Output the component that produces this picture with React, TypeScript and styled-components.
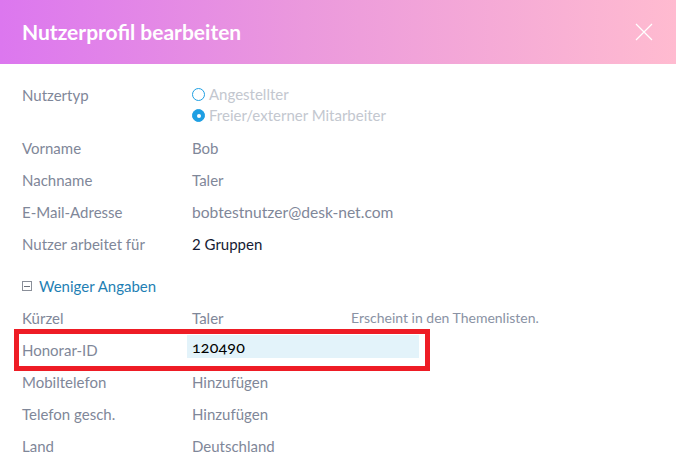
import React from "react";
import styled, { createGlobalStyle } from "styled-components";

/* Global reset and page font */
const GlobalStyle = createGlobalStyle`
    html, body {
        margin: 0;
        padding: 0;
        background: #ffffff;
    }
    body {
        font-family: "Lato", "Open Sans", sans-serif;
        font-size: 15px;
        color: #7f8799;
    }
    * { box-sizing: border-box; }
`;

const Dialog = styled.div`
    width: 676px;
    height: 461px;
    overflow: hidden;
    background: #ffffff;
`;

const Header = styled.header`
    height: 64px;
    display: flex;
    align-items: center;
    justify-content: space-between;
    padding: 0 22px;
    background: linear-gradient(90deg, #dc77ef 0%, #eb99dd 45%, #ffbbd0 100%);
`;

const Title = styled.h2`
    margin: 0;
    padding-bottom: 2px;
    font-size: 21px;
    font-weight: 700;
    color: #ffffff;
`;

const CloseButton = styled.button`
    width: 18px;
    height: 18px;
    padding: 0;
    margin-right: 1px;
    border: none;
    background: transparent;
    cursor: pointer;
    display: flex;
`;

const Body = styled.div`
    padding: 20px 22px 0;
`;

const Row = styled.div<{ $highlight?: boolean }>`
    display: grid;
    grid-template-columns: 170px 1fr;
    align-items: start;
    line-height: 32px;
    ${({ $highlight }) =>
        $highlight &&
        `
        margin-left: -3px;
        padding-left: 3px;
        width: 406px;
        outline: 5px solid #ee1c25;
    `}
`;

const TypeRow = styled(Row)`
    line-height: 21px;
    padding-bottom: 6px;
`;

const Label = styled.div`
    color: #7f8799;
`;

const TypeLabel = styled(Label)`
    padding-top: 1px;
`;

const Value = styled.div<{ $dark?: boolean }>`
    color: ${({ $dark }) => ($dark ? "#151a33" : "#7f8799")};
    display: flex;
    align-items: center;
    white-space: nowrap;
`;

const WideValue = styled(Value)`
    font-size: 15.6px;
`;

const ValueWithHint = styled.div`
    display: grid;
    grid-template-columns: 159px 1fr;
    align-items: center;
    color: #7f8799;
    white-space: nowrap;
`;

const Hint = styled.span`
    font-size: 14px;
    color: #8a92a4;
`;

const RadioGroup = styled.div`
    display: flex;
    flex-direction: column;
`;

const RadioOption = styled.label`
    display: flex;
    align-items: center;
    gap: 4px;
    color: #c3c7cf;
`;

const RadioDot = styled.span<{ $checked?: boolean }>`
    width: 13px;
    height: 13px;
    border-radius: 50%;
    border: 1.5px solid #1e9fe3;
    background: ${({ $checked }) => ($checked ? "#1e9fe3" : "#ffffff")};
    display: flex;
    align-items: center;
    justify-content: center;

    &::after {
        content: "";
        width: 4px;
        height: 4px;
        border-radius: 50%;
        background: #ffffff;
        display: ${({ $checked }) => ($checked ? "block" : "none")};
    }
`;

const ToggleRow = styled.div`
    margin-top: 10px;
    display: flex;
    align-items: center;
    gap: 7px;
    line-height: 32px;
    color: #1f7fb4;
`;

const ToggleBox = styled.span`
    width: 10px;
    height: 10px;
    border: 1px solid #8a8f99;
    display: flex;
    align-items: center;
    justify-content: center;

    &::after {
        content: "";
        width: 6px;
        height: 1px;
        background: #6d727c;
    }
`;

const FeeInput = styled.div`
    margin-left: -5px;
    margin-top: 1px;
    width: 232px;
    height: 23px;
    padding-left: 5px;
    display: flex;
    align-items: center;
    background: #e3f3fa;
    font-family: "Lato", sans-serif;
    font-variant-numeric: oldstyle-nums;
    font-size: 16px;
    font-weight: 400;
    letter-spacing: 0.2px;
    color: #000000;
`;

const fields = [
    { label: "Vorname", value: "Bob" },
    { label: "Nachname", value: "Taler" },
];

export default function App() {
    return (
        <Dialog>
            <GlobalStyle />
            <Header>
                <Title>Nutzerprofil bearbeiten</Title>
                <CloseButton aria-label="Schließen">
                    <svg width="18" height="18" viewBox="0 0 18 18">
                        <path d="M1 1 L17 17 M17 1 L1 17" stroke="#ffffff" strokeWidth="1.2" />
                    </svg>
                </CloseButton>
            </Header>

            <Body>
                <TypeRow>
                    <TypeLabel>Nutzertyp</TypeLabel>
                    <RadioGroup>
                        <RadioOption>
                            <RadioDot />
                            Angestellter
                        </RadioOption>
                        <RadioOption>
                            <RadioDot $checked />
                            Freier/externer Mitarbeiter
                        </RadioOption>
                    </RadioGroup>
                </TypeRow>

                {fields.map((f) => (
                    <Row key={f.label}>
                        <Label>{f.label}</Label>
                        <Value>{f.value}</Value>
                    </Row>
                ))}
                <Row>
                    <Label>E-Mail-Adresse</Label>
                    <WideValue>bobtestnutzer@desk-net.com</WideValue>
                </Row>
                <Row>
                    <Label>Nutzer arbeitet für</Label>
                    <Value $dark>2 Gruppen</Value>
                </Row>

                <ToggleRow>
                    <ToggleBox />
                    Weniger Angaben
                </ToggleRow>

                <Row>
                    <Label>Kürzel</Label>
                    <ValueWithHint>
                        <span>Taler</span>
                        <Hint>Erscheint in den Themenlisten.</Hint>
                    </ValueWithHint>
                </Row>
                <Row $highlight>
                    <Label>Honorar-ID</Label>
                    <Value>
                        <FeeInput>120490</FeeInput>
                    </Value>
                </Row>
                <Row>
                    <Label>Mobiltelefon</Label>
                    <Value>Hinzufügen</Value>
                </Row>
                <Row>
                    <Label>Telefon gesch.</Label>
                    <Value>Hinzufügen</Value>
                </Row>
                <Row>
                    <Label>Land</Label>
                    <Value>Deutschland</Value>
                </Row>
            </Body>
        </Dialog>
    );
}
